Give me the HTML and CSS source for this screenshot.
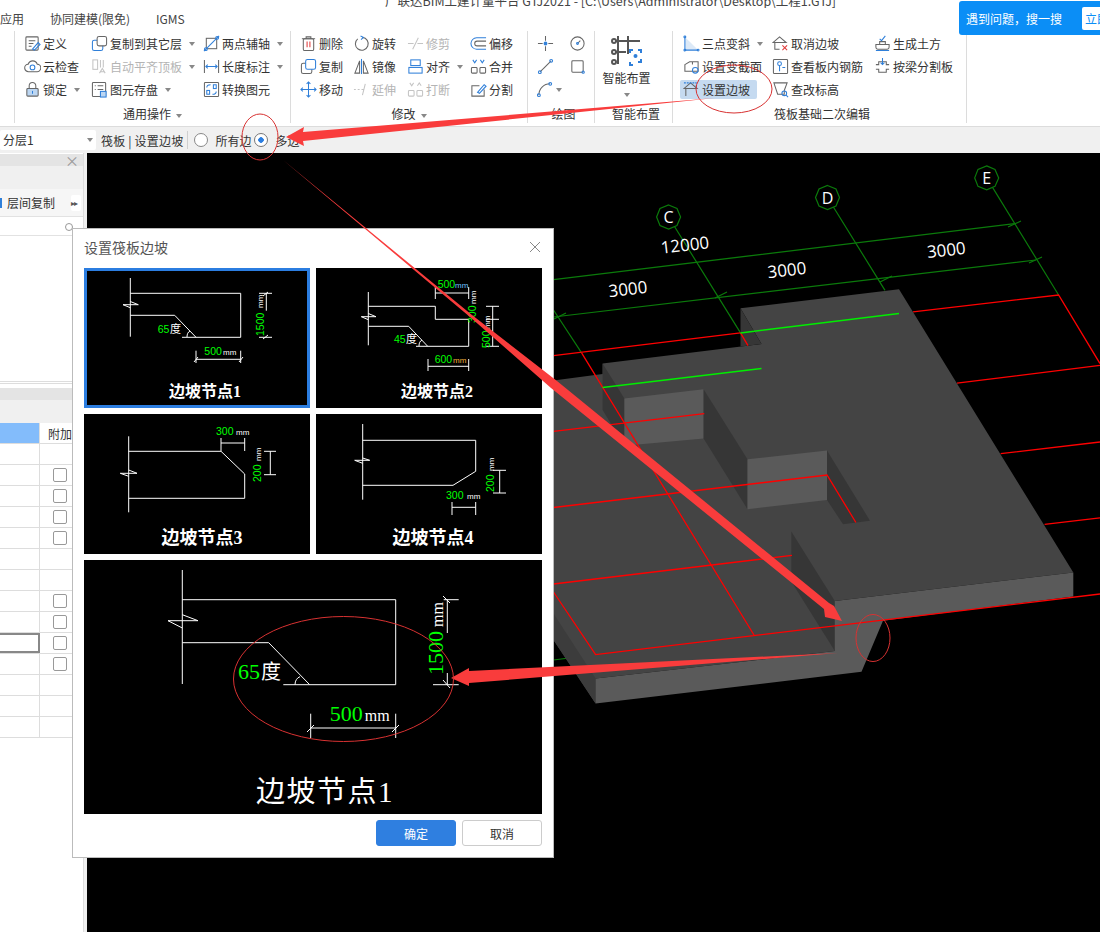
FILE: index.html
```html
<!DOCTYPE html>
<html lang="zh-CN">
<head>
  <meta charset="UTF-8">
  <title>设置筏板边坡</title>
  <link rel="stylesheet" href="styles.css">
</head>
<body>
<div class="app">
  <div class="titlebar">广联达BIM土建计量平台 GTJ2021 - [C:\Users\Administrator\Desktop\工程1.GTJ]</div>

  <div class="menubar">
    <span class="menu-first">应用</span>
    <span class="menu-second">协同建模(限免)</span>
    <span class="menu-third">IGMS</span>
  </div>

  <!-- ribbon -->
  <div class="ribbon">
    <div class="group g0"></div>

    <div class="group g1">
      <div class="tools">
        <div class="tool"><svg class="ic" viewBox="0 0 18 18"><rect x="2" y="2" width="13" height="14" rx="1"/><path d="M5 6h7M5 9h5M5 12h3"/><path class="b" d="M9 15l6-7 2 2-6 6z"/></svg><span>定义</span></div>
        <div class="tool"><svg class="ic" viewBox="0 0 18 18"><rect class="b" x="1.500" y="5.500" width="11" height="11" rx="2"/><rect x="6.500" y="1.500" width="10" height="10" rx="2" fill="#fff"/></svg><span>复制到其它层</span><i class="caret"></i></div>
        <div class="tool"><svg class="ic" viewBox="0 0 18 18"><rect x="3.500" y="3.500" width="11" height="11"/><path class="b" d="M1 17L17 1"/><circle class="b" cx="3" cy="15" r="1.500"/><circle class="b" cx="15" cy="3" r="1.500"/></svg><span>两点辅轴</span><i class="caret"></i></div>

        <div class="tool"><svg class="ic" viewBox="0 0 18 18"><path d="M5 14.500a4 4 0 0 1-.5-8A5 5 0 0 1 14 6.500a4 4 0 0 1-.5 8z"/><circle class="b" cx="9" cy="10" r="2.500"/></svg><span>云检查</span></div>
        <div class="tool off"><svg class="ic" viewBox="0 0 18 18"><rect x="2" y="2" width="5" height="10"/><path d="M10 2v8M13 2v8M9 16l3-5 3 5M10 14.500h4"/></svg><span>自动平齐顶板</span><i class="caret"></i></div>
        <div class="tool"><svg class="ic" viewBox="0 0 18 18"><path d="M1.500 2v14M16.500 2v14"/><path class="b" d="M3 9h12M5 7L3 9l2 2M13 7l2 2-2 2"/></svg><span>长度标注</span><i class="caret"></i></div>

        <div class="tool"><svg class="ic" viewBox="0 0 18 18"><path d="M5.500 8V5a3.500 3.500 0 0 1 7 0v3"/><rect x="3" y="8" width="12" height="8" rx="1" fill="#bcd6f2"/><path class="b" d="M9 10.500v3"/></svg><span>锁定</span><i class="caret"></i></div>
        <div class="tool"><svg class="ic" viewBox="0 0 18 18"><rect x="1.500" y="1.500" width="14" height="15" rx="1"/><path d="M4 5h1M7 5h6M4 9h1M7 9h6"/><rect class="b" x="10" y="11" width="6" height="6" fill="#bcd6f2"/></svg><span>图元存盘</span><i class="caret"></i></div>
        <div class="tool"><svg class="ic" viewBox="0 0 18 18"><rect x="1.500" y="1.500" width="15" height="15" rx="1"/><rect class="b" x="4" y="10" width="3" height="4"/><rect class="b" x="11" y="4" width="3" height="4"/><path class="b" d="M4 7c0-2 1-3 4-3M14 11c0 2-1 3-4 3"/></svg><span>转换图元</span></div>
      </div>
      <div class="group-label">通用操作<i class="caret"></i></div>
    </div>

    <div class="group g2">
      <div class="tools">
        <div class="tool"><svg class="ic" viewBox="0 0 18 18"><path d="M2 4h14M6.500 4V2h5v2"/><rect x="3.500" y="4" width="11" height="12.500" rx="1.500"/><path class="r" d="M7.500 7v6M10.500 7v6"/></svg><span>删除</span></div>
        <div class="tool"><svg class="ic" viewBox="0 0 18 18"><path d="M10 2.500a6.800 6.800 0 1 1-5 1.500"/><path class="b" d="M8 1l3 1.500L8.500 5"/></svg><span>旋转</span></div>
        <div class="tool off"><svg class="ic" viewBox="0 0 18 18"><path d="M1 9h6M11 9h6M12 3l-6 12"/></svg><span>修剪</span></div>
        <div class="tool"><svg class="ic" viewBox="0 0 18 18"><path class="b" d="M17 3H7a6 6 0 0 0 0 12h10"/><path d="M17 6.500H7.500a2.500 2.500 0 0 0 0 5H17"/></svg><span>偏移</span></div>

        <div class="tool"><svg class="ic" viewBox="0 0 18 18"><rect x="1.500" y="5.500" width="11" height="11" rx="2"/><rect class="b" x="6" y="1.500" width="10.500" height="10.500" rx="2" fill="#fff"/></svg><span>复制</span></div>
        <div class="tool"><svg class="ic" viewBox="0 0 18 18"><path d="M7 3L2 16h5zM11 3l5 13h-5z"/><path class="b" d="M9 1v16"/></svg><span>镜像</span></div>
        <div class="tool"><svg class="ic" viewBox="0 0 18 18"><rect class="b" x="4" y="2" width="10" height="6"/><rect class="b" x="2" y="10" width="14" height="6"/></svg><span>对齐</span><i class="caret"></i></div>
        <div class="tool"><svg class="ic" viewBox="0 0 18 18"><rect x="1.500" y="10" width="6" height="6" rx="1"/><rect x="10.500" y="10" width="6" height="6" rx="1"/><path class="b" d="M3 2l2 3 2-3M11 2l2 3 2-3"/></svg><span>合并</span></div>

        <div class="tool"><svg class="ic" viewBox="0 0 18 18"><path class="b" d="M9 1v16M1 9h16M7 3l2-2 2 2M7 15l2 2 2-2M3 7L1 9l2 2M15 7l2 2-2 2"/></svg><span>移动</span></div>
        <div class="tool off"><svg class="ic" viewBox="0 0 18 18"><path d="M1 9h2M5 9h2M9 9h2M13 3l-3 12"/></svg><span>延伸</span></div>
        <div class="tool off"><svg class="ic" viewBox="0 0 18 18"><rect x="1.500" y="10" width="6" height="6" rx="1"/><rect x="10.500" y="10" width="6" height="6" rx="1"/><path d="M3 2l2 3 2-3M11 5l2-3 2 3"/></svg><span>打断</span></div>
        <div class="tool"><svg class="ic" viewBox="0 0 18 18"><path d="M10 5H2v11h13V9"/><path class="b" d="M8 12l7-8 2 1.500-7 7.500z"/></svg><span>分割</span></div>
      </div>
      <div class="group-label">修改<i class="caret"></i></div>
    </div>

    <div class="group g3">
      <div class="tools">
        <div class="tool"><svg class="ic" viewBox="0 0 18 18"><path d="M1 9h5M12 9h5M9 1v5M9 12v5"/><circle class="b" cx="9" cy="9" r="1.500" fill="#2f7fd9"/></svg></div>
        <div class="tool"><svg class="ic" viewBox="0 0 18 18"><circle cx="9" cy="9" r="7"/><path d="M9 9l3-3"/><circle class="b" cx="9" cy="9" r="1"/></svg></div>

        <div class="tool"><svg class="ic" viewBox="0 0 18 18"><path d="M3 15L15 3"/><circle class="b" cx="3" cy="15" r="1.500"/><circle class="b" cx="15" cy="3" r="1.500"/></svg></div>
        <div class="tool"><svg class="ic" viewBox="0 0 18 18"><rect x="3" y="3" width="12" height="12" rx="1"/><circle class="b" cx="15" cy="15" r="1.200"/></svg></div>

        <div class="tool"><svg class="ic" viewBox="0 0 18 18"><path d="M2 15C2 8 7 3 14 3"/><circle class="b" cx="2" cy="15" r="1.500"/><circle class="b" cx="14" cy="3" r="1.500"/></svg><i class="caret"></i></div>
      </div>
      <div class="group-label">绘图</div>
    </div>

    <div class="group g4">
      <div class="big-tool">
        <svg class="big-ic" viewBox="0 0 32 32"><path d="M7 2v28M17 2v18M3 7h26M3 18h12"/><g class="b"><path d="M19 18v-3h3M27 15h3v3M30 24v3h-3M22 30h-3v-3" transform="translate(0 1)"/><circle cx="24.500" cy="22" r="1"/></g><circle cx="3" cy="7" r="2" fill="#fff"/><circle cx="3" cy="18" r="2" fill="#fff"/><circle cx="3" cy="28" r="2" fill="#fff"/></svg>
        <span>智能布置</span>
        <i class="caret"></i>
      </div>
      <div class="group-label">智能布置</div>
    </div>

    <div class="group g5">
      <div class="tools">
        <div class="tool"><svg class="ic" viewBox="0 0 18 18"><path d="M2 2v14h14z" fill="#dce9f7" stroke="none"/><path class="b" d="M2 2v14h14"/><circle class="b" cx="2" cy="2" r="1"/><circle class="b" cx="2" cy="16" r="1"/><circle class="b" cx="16" cy="16" r="1"/></svg><span>三点变斜</span><i class="caret"></i></div>
        <div class="tool"><svg class="ic" viewBox="0 0 18 18"><path d="M1 8l7-6 7 6H1zM3 8v7h5"/><path class="r" d="M11 11l5 5M16 11l-5 5"/></svg><span>取消边坡</span></div>
        <div class="tool"><svg class="ic" viewBox="0 0 18 18"><path d="M2 10h14v3a2 2 0 0 1-2 2H4a2 2 0 0 1-2-2zM6 10V7h6v3"/><path class="b" d="M6 4l2 2 4-5M2 16.500h14"/></svg><span>生成土方</span></div>

        <div class="tool"><svg class="ic" viewBox="0 0 18 18"><path d="M2 7l5-3h9v10H2zM10 4v3"/><circle class="b" cx="13" cy="13" r="3"/></svg><span>设置变截面</span></div>
        <div class="tool"><svg class="ic" viewBox="0 0 18 18"><rect x="1.500" y="1.500" width="15" height="15" rx="1"/><circle class="b" cx="8" cy="6" r="2"/><path class="b" d="M8 8v6M11 10h3"/></svg><span>查看板内钢筋</span></div>
        <div class="tool"><svg class="ic" viewBox="0 0 18 18"><path d="M2 7h3V4h8v3h3M2 12h3v3h8v-3h3"/><path class="b" d="M9 0v7M7 5l2 2 2-2"/></svg><span>按梁分割板</span></div>

        <div class="tool active"><svg class="ic" viewBox="0 0 18 18"><path d="M1 8l7-6 7 6H1zM3 8v8"/><path class="b" d="M1 2h13v6" stroke-dasharray="2 1"/></svg><span>设置边坡</span></div>
        <div class="tool"><svg class="ic" viewBox="0 0 18 18"><path d="M2 2h14l-3 8v4H6z"/><circle class="b" cx="13" cy="13" r="2.500"/><path class="b" d="M15 15l2 2"/></svg><span>查改标高</span></div>
      </div>
      <div class="group-label">筏板基础二次编辑</div>
    </div>
  </div>

  <!-- option bar -->
  <div class="optionbar">
    <div class="layer-select">分层1<i class="caret"></i></div>
    <span class="opt-title">筏板 | 设置边坡</span>
    <span class="opt-sep"></span>
    <label class="radio"><i class="radio-dot"></i>所有边</label>
    <label class="radio"><i class="radio-dot checked"></i>多边</label>
  </div>

  <div class="workspace">
    <!-- left panel -->
    <aside class="panel">
      <div class="panel-head"><span class="panel-x">×</span></div>
      <div class="panel-bar"></div>
      <div class="panel-tools"><i class="mini-icon"></i><span>层间复制</span><b class="more">▸▸</b></div>
      <div class="panel-search"><i class="search-ring"></i></div>
      <div class="panel-list"></div>
      <div class="panel-head second"></div>
      <div class="panel-bar second"></div>
      <div class="prop-head"><div class="cell-a sel"></div><div class="cell-b">附加</div></div>
      <div class="prop-row"><div class="cell-a"></div><div class="cell-b"></div></div>
      <div class="prop-row"><div class="cell-a"></div><div class="cell-b"><i class="check"></i></div></div>
      <div class="prop-row"><div class="cell-a"></div><div class="cell-b"><i class="check"></i></div></div>
      <div class="prop-row"><div class="cell-a"></div><div class="cell-b"><i class="check"></i></div></div>
      <div class="prop-row"><div class="cell-a"></div><div class="cell-b"><i class="check"></i></div></div>
      <div class="prop-row"><div class="cell-a"></div><div class="cell-b"></div></div>
      <div class="prop-row"><div class="cell-a"></div><div class="cell-b"></div></div>
      <div class="prop-row"><div class="cell-a"></div><div class="cell-b"><i class="check"></i></div></div>
      <div class="prop-row"><div class="cell-a"></div><div class="cell-b"><i class="check"></i></div></div>
      <div class="prop-row"><div class="cell-a focus"></div><div class="cell-b"><i class="check"></i></div></div>
      <div class="prop-row"><div class="cell-a"></div><div class="cell-b"><i class="check"></i></div></div>
      <div class="prop-row"><div class="cell-a"></div><div class="cell-b"></div></div>
      <div class="prop-row"><div class="cell-a"></div><div class="cell-b"></div></div>
      <div class="prop-row"><div class="cell-a"></div><div class="cell-b"></div></div>
    </aside>

    <!-- 3d model, viewBox uses page coordinates -->
    <svg class="canvas" viewBox="87 153 1013 779">
      <g class="dim">
        <path d="M553.500 279.600L1014.700 223.600M553.500 317L1035.800 260M553.500 660L595.600 654.600"/>
        <path d="M668.600 217L740.500 332.900M827.500 197.500L885 290.400M986.700 177.900L1058.600 295M553.500 310L581.600 352.900"/>
        <path d="M1008 227l13-6M1029 263l13-6M880 282l12-6M715 298l12-6M554 319l12-6"/>
        <polygon points="668.600,205 677,208.500 680.600,217 677,225.500 668.600,229 660,225.500 656.600,217 660,208.500" fill="#000"/>
        <polygon points="827.500,185.500 836,189 839.500,197.500 836,206 827.500,209.500 819,206 815.500,197.500 819,189" fill="#000"/>
        <polygon points="986.700,165.900 995,169.400 998.700,177.900 995,186.400 986.700,189.900 978,186.400 974.700,177.900 978,169.400" fill="#000"/>
      </g>
      <text class="axis" x="668.600" y="223">C</text>
      <text class="axis" x="827.500" y="203.500">D</text>
      <text class="axis" x="986.700" y="184">E</text>
      <text class="len" x="685" y="251" transform="rotate(-6.500 685 246)">12000</text>
      <text class="len" x="628" y="295" transform="rotate(-6.500 628 290)">3000</text>
      <text class="len" x="787" y="276" transform="rotate(-6.500 787 271)">3000</text>
      <text class="len" x="946.400" y="256" transform="rotate(-6.500 946 251)">3000</text>

      <path class="rd" d="M553.500 355.700L740.500 332.900M913 311.800L1058.600 295L1100 363.600M957 383.200L1100 365.400M1000.700 453.600L1100 442M1044.600 524.300L1100 517.900"/>

      <polygon class="top" points="553.500,380.400 602.600,374 602.600,363.600 761.500,344 740.500,308.200 899,289.300 1073.300,572.500 834.800,601 834.800,651 595.600,678.600 595.600,703.600 553.500,640"/>
      <polygon class="side" points="553.500,613.600 595.600,678.600 595.600,703.600 553.500,640"/>
      <polygon class="dark" points="740.500,308.200 761.500,344 740.500,346.400"/>
      <polygon class="dark" points="602.600,363.600 624.400,398.600 624.400,445.700 602.600,410"/>
      <polygon class="face" points="624.400,398.600 703.600,389.300 703.600,438.600 624.400,445.700"/>
      <polygon class="dark" points="703.600,389.300 747.500,459.300 747.500,509.300 703.600,438.600"/>
      <polygon class="face" points="747.500,459.300 827,450.400 827,500 747.500,509.300"/>
      <polygon class="dark" points="827,450.400 870,520.700 843,524.300 827,500"/>
      <polygon class="dark" points="791.300,531.400 834.800,601 834.800,651 791.300,581.400"/>
      <polygon class="face" points="595.600,678.600 834.800,651 834.800,601 1073.300,572.500 1073.300,596.400 883,620.700 861.500,671.800 595.600,703.600"/>

      <path class="rd" d="M553.500 431.400L704.300 413.600M553.500 507.500L827 475L855.900 522.500M553.500 584L792 555.400M553.500 592L595.600 654.600L1100 594M581.600 352.900L754 635M740.500 332.900L748 345.700"/>
      <path class="gr" d="M740.500 332.900L899 313.600M602.600 387.500L761.500 368.600"/>
    </svg>
  </div>

  <!-- dialog -->
  <div class="dialog">
    <div class="dialog-head"><span>设置筏板边坡</span><svg class="close" viewBox="0 0 12 12"><path d="M1 1l10 10M11 1L1 11"/></svg></div>
    <div class="cards">
      <div class="card selected">
        <svg class="drawing" viewBox="0 0 226 140">
          <path class="ln" d="M46.300 10V68.700M46.300 25.300H156.700V69.300H98M46.300 47.300H90.700L112 69.300M39 36.700H54.300L46.300 33.500M39 36.700l7.300 3M112 91.300H156.700M112 82.700V95M156.700 82.700V95M110 94l4-5M155 94l4-5M182.300 25V42.700M175 25.300H188M175 69.300H188M179 28l5-4M179 71l5-4M103 69c0-3 1-5 3-6"/>
          <text class="num" x="73.700" y="65">65</text><text class="unit cjk" x="86" y="65">度</text>
          <text class="num" x="120.300" y="86.700">500</text><text class="unit" x="139" y="86.700">mm</text>
          <text class="num" transform="rotate(-90 180 68)" x="180" y="68">1500</text><text class="unit" transform="rotate(-90 179 40)" x="179" y="40">mm</text>
          <text class="card-title" x="121" y="129">边坡节点1</text>
        </svg>
      </div>
      <div class="card">
        <svg class="drawing" viewBox="0 0 226 140">
          <path class="ln" d="M52.300 24V77.300M52.300 38.300H119.300V51.300H152.700V78.300H100M52.300 58.300H92.700L111.700 78.300M45.300 48.700H60L52.300 45.500M45.300 48.700l7 3M119.300 25H152.700M119.300 19V31M152.700 19V31M112 98.300H152.700M112 91V103M152.700 91V103M176.700 38.300V78.300M170 38.300H183M170 51.300H183M170 78.300H183M103 78c0-3 1-5 3-6"/>
          <text class="num" x="78" y="75">45</text><text class="unit cjk" x="90" y="75">度</text>
          <text class="num" x="121.700" y="20">500</text><text class="unit blue" x="139" y="20">mm</text>
          <text class="num" x="118.700" y="95">600</text><text class="unit amber" x="137" y="95">mm</text>
          <text class="num" transform="rotate(-90 160 55)" x="160" y="55">300</text><text class="unit" transform="rotate(-90 160 36)" x="160" y="36">mm</text>
          <text class="num" transform="rotate(-90 174 80)" x="174" y="80">500</text><text class="unit" transform="rotate(-90 174 61)" x="174" y="61">mm</text>
          <text class="card-title" x="121" y="129">边坡节点2</text>
        </svg>
      </div>
      <div class="card">
        <svg class="drawing" viewBox="0 0 226 140">
          <path class="ln" d="M44.700 22.300V98.300M44.700 37.300H137L160.700 60V84.300H44.700M36.300 59.300H53L44.700 56M36.300 59.300l8.400 3M137 29H160.700M137 24V37M160.700 24V37M186.300 37.300V60.700M180 37.300H192M180 60.700H192"/>
          <text class="num" x="132" y="20.700">300</text><text class="unit" x="152" y="20.700">mm</text>
          <text class="num" transform="rotate(-90 177 68)" x="177" y="68">200</text><text class="unit" transform="rotate(-90 177 47)" x="177" y="47">mm</text>
          <text class="card-title big" x="118" y="130">边坡节点3</text>
        </svg>
      </div>
      <div class="card">
        <svg class="drawing" viewBox="0 0 226 140">
          <path class="ln" d="M46.700 10V85.700M46.700 26.300H159.700V57.300L137 71.300H46.700M38.700 46.300H53.700L46.700 44M38.700 46.300l8 3M136 93.300H159.700M136 88V101M159.700 88V101M183.700 56.300V79M177 56.300H190M177 79H190"/>
          <text class="num" x="130" y="84.700">300</text><text class="unit" x="151" y="84.700">mm</text>
          <text class="num" transform="rotate(-90 177.700 78)" x="177.700" y="78">200</text><text class="unit" transform="rotate(-90 177.700 57)" x="177.700" y="57">mm</text>
          <text class="card-title big" x="117" y="130">边坡节点4</text>
        </svg>
      </div>
    </div>
    <div class="preview">
      <svg class="drawing" viewBox="0 0 458 254">
        <path class="ln" d="M98.300 10V124M98.300 39.700H311.700V124.700H199.300M98.300 82.700H184.700L225.700 124.700M84 60.700H114L98.300 54.700M84 60.700L98.300 68M226.700 168H311.700M226.700 153.700V178M311.700 153.700V178M223 172l7-7M308 172l7-7M363.300 39.700V73M363.300 113V124.700M359.700 39.700H374.700M349 124.700H374.700M359 36l7 7M359 120l7 8M211 124.700c0-4 2-7 5-8"/>
        <text class="num large" x="154" y="118.700">65</text><text class="unit cjk large" x="177" y="118.700">度</text>
        <text class="num large" x="245.700" y="161">500</text><text class="unit medium" x="280.700" y="161">mm</text>
        <text class="num large" transform="rotate(-90 359 115)" x="359" y="115">1500</text><text class="unit medium" transform="rotate(-90 359 67)" x="359" y="67">mm</text>
        <text class="preview-title" x="241" y="242">边坡节点1</text>
      </svg>
    </div>
    <div class="dialog-foot">
      <button type="button" class="btn primary">确定</button>
      <button type="button" class="btn">取消</button>
    </div>
  </div>

  <!-- search tip -->
  <div class="search-tip"><span>遇到问题，搜一搜</span><b>立即</b></div>

  <!-- red annotations drawn on top of the screenshot -->
  <svg class="marks" viewBox="0 0 1100 932">
    <polygon class="arrow" points="286,137 304,127 303,132 715,98 303,141 304,146"/>
    <polygon class="arrow" points="283,160 472,315 557,381 829,603 834,606 842,621 825,617 824,609 551,388 470,317"/>
    <polygon class="arrow" points="451,678 469,668 469,671 838,653 469,683 469,686"/>
    <ellipse class="ring" cx="260" cy="137" rx="18" ry="23"/>
    <ellipse class="ring" cx="734" cy="89" rx="38" ry="24"/>
    <ellipse class="ring" cx="873" cy="638" rx="17" ry="23.500"/>
    <ellipse class="ring" cx="343.500" cy="679" rx="110" ry="62.500"/>
  </svg>
</div>
</body>
</html>
```

FILE: styles.css
```css
* {
  box-sizing: border-box;
}

body {
  margin: 0;
  background: #fff;
  font-family: "Noto Sans CJK SC", "Liberation Sans", sans-serif;
  font-size: 12px;
  color: #333;
  overflow: hidden;
}

.app {
  position: relative;
  width: 1100px;
  height: 932px;
  overflow: hidden;
  display: flex;
  flex-direction: column;
}

.titlebar {
  height: 8px;
  line-height: 2px;
  padding-left: 385px;
  overflow: hidden;
  white-space: nowrap;
  font-size: 12.500px;
  color: #444;
}

.menubar {
  height: 20px;
  line-height: 22px;
  display: flex;
  color: #444;
}

.menu-first {
  width: 50px;
}

.menu-second {
  width: 106px;
}

/* ribbon */
.ribbon {
  height: 99px;
  padding-top: 3px;
  display: flex;
  align-items: flex-start;
  background: #fff;
  border-bottom: 1px solid #dcdcdc;
}

.group {
  height: 92px;
  flex: none;
  display: flex;
  flex-direction: column;
  border-right: 1px solid #dcdcdc;
}

.g0 { width: 15px; }
.g1 { width: 276px; }
.g2 { width: 237px; }
.g3 { width: 67px; }
.g4 { width: 78px; }
.g5 { width: 294px; }

.tools {
  display: grid;
  grid-auto-flow: row;
  grid-auto-rows: 23px;
  height: 72px;
  margin-top: 1px;
  padding-left: 9px;
}

.g1 .tools { grid-template-columns: 67px 112px 1fr; }
.g2 .tools { grid-template-columns: 53px 54px 63px 1fr; }
.g3 .tools { grid-template-columns: 32px 32px; }
.g5 .tools { grid-template-columns: 89px 102px 1fr; padding-left: 10px; }

.tool {
  display: flex;
  align-items: center;
  gap: 2px;
  white-space: nowrap;
}

.tool.off {
  color: #b4b4b4;
}

.tool.active {
  margin: 2px 15px 2px -3px;
  padding-left: 3px;
  background: #c5daf0;
  border-radius: 2px;
}

.ic {
  width: 17px;
  height: 17px;
  flex: none;
  fill: none;
  stroke: #666;
  stroke-width: 1.100;
}

.tool.off .ic {
  stroke: #c4c4c4;
}

.b {
  stroke: #2f7fd9;
}

.r {
  stroke: #e03a3a;
}

.caret {
  display: inline-block;
  width: 0;
  height: 0;
  margin-left: 5px;
  border-style: solid;
  border-width: 4px 3.500px 0;
  border-color: #888 transparent transparent;
  vertical-align: middle;
}

.g3 .caret {
  margin-left: 0;
}

.group-label {
  height: 19px;
  line-height: 19px;
  text-align: center;
  white-space: nowrap;
}

.g3 .group-label,
.g4 .group-label,
.g5 .group-label {
  margin-top: 2px;
  padding-left: 5px;
}

.big-tool {
  height: 73px;
  display: flex;
  flex-direction: column;
  align-items: center;
  padding-top: 3px;
  padding-right: 14px;
}

.big-ic {
  width: 32px;
  height: 32px;
  fill: none;
  stroke: #555;
  stroke-width: 2;
}

.big-tool span {
  margin-top: 3px;
  line-height: 18px;
}

.big-tool .caret {
  margin: 6px 0 0;
}

/* option bar */
.optionbar {
  height: 26px;
  flex: none;
  display: flex;
  align-items: center;
  background: #f0f0f0;
}

.layer-select {
  width: 96px;
  height: 20px;
  line-height: 20px;
  padding-left: 3px;
  display: flex;
  justify-content: space-between;
  align-items: center;
  padding-right: 3px;
  background: #fff;
  border-radius: 2px;
}

.opt-title {
  margin-left: 5px;
  letter-spacing: 0.200px;
}

.opt-sep {
  width: 1px;
  height: 18px;
  margin: 0 6px 0 4px;
  background: #cfcfcf;
}

.radio {
  display: flex;
  align-items: center;
  gap: 7px;
  margin-right: 3px;
}

.radio-dot {
  width: 14px;
  height: 14px;
  border: 1px solid #888;
  border-radius: 50%;
  background: #fff;
}

.radio-dot.checked {
  border-color: #777;
  background: radial-gradient(circle, #2b7de0 0 2.500px, #fff 3px);
}

/* left panel and canvas */
.workspace {
  flex: 1;
  display: flex;
  background: #f0f0f0;
}

.panel {
  width: 84px;
  flex: none;
  background: #fff;
  border-right: 1px solid #ddd;
}

.panel-head {
  height: 12px;
  margin-top: 1px;
  background: #e4e4e4;
  text-align: right;
}

.panel-x {
  display: block;
  padding-right: 4px;
  line-height: 12px;
  font-size: 14px;
  color: #999;
}

.panel-bar {
  height: 23px;
  background: #f0f0f0;
}

.panel-tools {
  height: 28px;
  display: flex;
  align-items: center;
  background: #f6f6f6;
  border-bottom: 1px solid #e2e2e2;
}

.mini-icon {
  width: 2px;
  height: 10px;
  margin-right: 5px;
  background: #2f7fd9;
}

.more {
  margin-left: 16px;
  width: 10px;
  height: 16px;
  line-height: 16px;
  font-size: 8px;
  font-weight: normal;
  letter-spacing: -1px;
  color: #555;
  background: #fff;
  border-radius: 2px;
  white-space: nowrap;
}

.panel-search {
  height: 19px;
  position: relative;
  border-bottom: 1px solid #e2e2e2;
}

.search-ring {
  position: absolute;
  left: 65px;
  top: 6px;
  width: 8px;
  height: 8px;
  border: 1px solid #999;
  border-radius: 50%;
}

.panel-list {
  height: 148px;
  border-bottom: 3px double #ddd;
}

.panel-head.second {
  height: 12px;
  margin-top: 4px;
}

.panel-bar.second {
  height: 23px;
}

.prop-head,
.prop-row {
  height: 21px;
  display: flex;
  border-bottom: 1px solid #ddd;
}

.cell-a {
  width: 40px;
  flex: none;
  border-right: 1px solid #ddd;
}

.cell-a.sel {
  background: #83bcfb;
}

.cell-a.focus {
  margin-left: -3px;
  width: 43px;
  border: 2px solid #888;
}

.cell-b {
  flex: 1;
  display: flex;
  align-items: center;
  padding-left: 8px;
  line-height: 21px;
}

.prop-head .cell-b {
  padding-left: 8px;
  white-space: nowrap;
}

.check {
  width: 14px;
  height: 14px;
  margin-left: 5px;
  border: 1px solid #999;
  border-radius: 2px;
}

.canvas {
  width: 1013px;
  height: 779px;
  margin-left: 3px;
  background: #000;
  flex: none;
}

.dim {
  fill: none;
  stroke: #0b7a0b;
  stroke-width: 1.200;
}

.axis {
  fill: #fff;
  font: 16px "Open Sans", sans-serif;
  text-anchor: middle;
}

.len {
  fill: #fff;
  font: 17px "Open Sans", sans-serif;
  text-anchor: middle;
}

.top { fill: #444; }
.side { fill: #3c3c3c; }
.dark { fill: #363636; }
.face { fill: #5a5a5a; }

.rd {
  fill: none;
  stroke: #f00;
  stroke-width: 1.300;
}

.gr {
  fill: none;
  stroke: #0e0;
  stroke-width: 1.500;
}

/* dialog */
.dialog {
  position: absolute;
  left: 72px;
  top: 228px;
  width: 482px;
  height: 630px;
  padding: 0 11px;
  display: flex;
  flex-direction: column;
  background: #fff;
  border: 1px solid #bbb;
}

.dialog-head {
  height: 39px;
  padding-bottom: 3px;
  display: flex;
  justify-content: space-between;
  align-items: center;
  font-size: 14px;
  color: #555;
}

.close {
  width: 12px;
  height: 12px;
  margin-right: 1px;
  fill: none;
  stroke: #888;
}

.cards {
  display: grid;
  grid-template-columns: 226px 226px;
  grid-auto-rows: 140px;
  gap: 6px;
}

.card {
  position: relative;
  background: #000;
}

.card.selected {
  outline: 3px solid #2b7de0;
  outline-offset: -3px;
}

.drawing {
  display: block;
  width: 100%;
  height: 100%;
  font-family: "Liberation Sans", sans-serif;
}

.preview {
  height: 254px;
  margin-top: 6px;
  background: #000;
}

.ln {
  fill: none;
  stroke: #fff;
  stroke-width: 1;
}

.num {
  fill: #0f0;
  font-size: 10.500px;
}

.unit {
  fill: #fff;
  font-size: 8px;
}

.unit.cjk {
  font-family: "Noto Sans CJK SC", sans-serif;
  font-size: 11px;
}

.unit.blue { fill: #6fc3ff; }
.unit.amber { fill: #f2b03a; }

.card-title {
  fill: #fff;
  font: bold 16px "Liberation Serif", "Noto Sans CJK SC", serif;
  text-anchor: middle;
}

.card-title.big {
  font-size: 18px;
}

.num.large {
  font-family: "Liberation Serif", serif;
  font-size: 22px;
}

.unit.cjk.large {
  font-size: 20px;
}

.unit.medium {
  font-family: "Liberation Serif", serif;
  font-size: 16px;
}

.preview-title {
  fill: #fff;
  font: 29px "Liberation Serif", "Noto Sans CJK SC", serif;
  letter-spacing: 1.500px;
  text-anchor: middle;
}

.dialog-foot {
  height: 26px;
  margin-top: 6px;
  display: flex;
  justify-content: flex-end;
  gap: 6px;
}

.btn {
  width: 80px;
  height: 26px;
  padding: 0;
  border: 1px solid #ccc;
  border-radius: 3px;
  background: #fff;
  color: #333;
  font: 12px "Noto Sans CJK SC", sans-serif;
}

.btn.primary {
  border-color: #2f7fe0;
  background: #2f7fe0;
  color: #fff;
}

/* search tip */
.search-tip {
  position: absolute;
  left: 959px;
  top: 1px;
  width: 141px;
  height: 34px;
  padding-left: 7px;
  display: flex;
  align-items: center;
  gap: 20px;
  background: #0b8ef6;
  border-radius: 3px 0 0 3px;
  color: #fff;
  white-space: nowrap;
  overflow: hidden;
}

.search-tip b {
  padding: 3px 6px 3px 3px;
  font-weight: normal;
  color: #0b8ef6;
  background: #fff;
  border-radius: 2px;
}

.marks {
  position: absolute;
  left: 0;
  top: 0;
  width: 1100px;
  height: 932px;
  pointer-events: none;
}

.arrow {
  fill: #f93c3c;
}

.ring {
  fill: none;
  stroke: #d83232;
  stroke-width: 1;
}
```
